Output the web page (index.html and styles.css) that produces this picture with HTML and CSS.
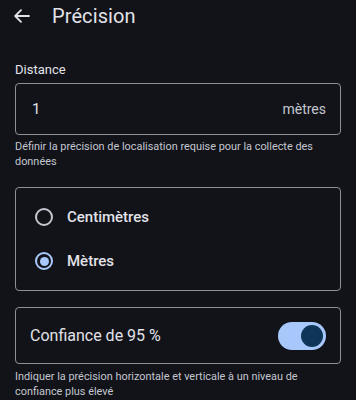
FILE: index.html
```html
<!DOCTYPE html>
<html lang="fr">
<head>
    <meta charset="UTF-8">
    <meta name="viewport" content="width=device-width, initial-scale=1.0">
    <title>Précision</title>
    <link rel="stylesheet" href="styles.css">
</head>
<body>
    <header class="top-bar">
        <button class="back-btn" aria-label="Retour">
            <svg width="16" height="14" viewBox="0 0 16 14" fill="none" stroke="currentColor" stroke-width="1.8" stroke-linecap="round" stroke-linejoin="round">
                <path d="M15 7H1.5M7 1.2L1.2 7L7 12.8"/>
            </svg>
        </button>
        <h1 class="page-title">Précision</h1>
    </header>

    <main class="content">
        <div class="field">
            <label class="field-label" for="distance">Distance</label>
            <div class="input-box">
                <input type="text" id="distance" value="1">
                <span class="suffix">mètres</span>
            </div>
            <p class="helper">Définir la précision de localisation requise pour la collecte des données</p>
        </div>

        <div class="card radio-card">
            <label class="radio-row">
                <input type="radio" name="unit" value="cm">
                <span class="radio"></span>
                <span class="radio-text">Centimètres</span>
            </label>
            <label class="radio-row">
                <input type="radio" name="unit" value="m" checked>
                <span class="radio"></span>
                <span class="radio-text">Mètres</span>
            </label>
        </div>

        <div class="card switch-card">
            <span class="switch-text">Confiance de 95 %</span>
            <label class="switch">
                <input type="checkbox" checked>
                <span class="track"><span class="thumb"></span></span>
            </label>
        </div>
        <p class="helper">Indiquer la précision horizontale et verticale à un niveau de confiance plus élevé</p>
    </main>
</body>
</html>
```

FILE: styles.css
```css
* {
    margin: 0;
    padding: 0;
    box-sizing: border-box;
}

body {
    font-family: Roboto, "Noto Sans", sans-serif;
    background-color: #111318;
    color: #e2e2e9;
}

.top-bar {
    height: 32px;
    display: flex;
    align-items: center;
    padding-left: 14px;
}

.back-btn {
    background: none;
    border: none;
    color: #e2e2e9;
    width: 16px;
    height: 14px;
    display: flex;
    cursor: pointer;
}

.page-title {
    font-size: 20px;
    font-weight: 400;
    margin-left: 22px;
    letter-spacing: 0.1px;
}

.content {
    padding: 30px 15px 0;
}

.field-label {
    display: block;
    font-size: 13px;
    line-height: 16px;
    color: #e2e2e9;
    margin-bottom: 5px;
}

.input-box {
    height: 52px;
    border: 1px solid #8e9099;
    border-radius: 4px;
    display: flex;
    align-items: center;
    padding: 0 14px 0 16px;
}

.input-box input {
    flex: 1;
    min-width: 0;
    background: none;
    border: none;
    outline: none;
    color: #e2e2e9;
    font-family: inherit;
    font-size: 15px;
}

.suffix {
    font-size: 14px;
    color: #c4c6d0;
}

.helper {
    font-size: 10.9px;
    line-height: 15px;
    color: #c4c6d0;
    padding-top: 4px;
}

.card {
    border: 1px solid #8e9099;
    border-radius: 4px;
}

.radio-card {
    margin-top: 18px;
    padding: 7px 0;
}

.radio-row {
    height: 44px;
    display: flex;
    align-items: center;
    padding-left: 19px;
    cursor: pointer;
}

.radio-row input {
    display: none;
}

.radio {
    width: 18px;
    height: 18px;
    border: 2px solid #c4c6d0;
    border-radius: 50%;
    display: flex;
    align-items: center;
    justify-content: center;
}

.radio-row input:checked + .radio {
    border-color: #a8c8fb;
}

.radio-row input:checked + .radio::after {
    content: "";
    width: 9px;
    height: 9px;
    border-radius: 50%;
    background: #a8c8fb;
}

.radio-text {
    margin-left: 14px;
    font-size: 15px;
    font-weight: 500;
}

.switch-card {
    margin-top: 16px;
    height: 57px;
    display: flex;
    align-items: center;
    justify-content: space-between;
    padding: 0 14px 0 14px;
}

.switch-text {
    font-size: 16px;
}

.switch input {
    display: none;
}

.track {
    width: 48px;
    height: 28px;
    border-radius: 14px;
    background: #a8c8fb;
    display: flex;
    align-items: center;
    justify-content: flex-end;
    padding-right: 3px;
}

.thumb {
    width: 22px;
    height: 22px;
    border-radius: 50%;
    background: #0e3658;
}

.switch-card + .helper {
    padding-top: 5px;
}
```
